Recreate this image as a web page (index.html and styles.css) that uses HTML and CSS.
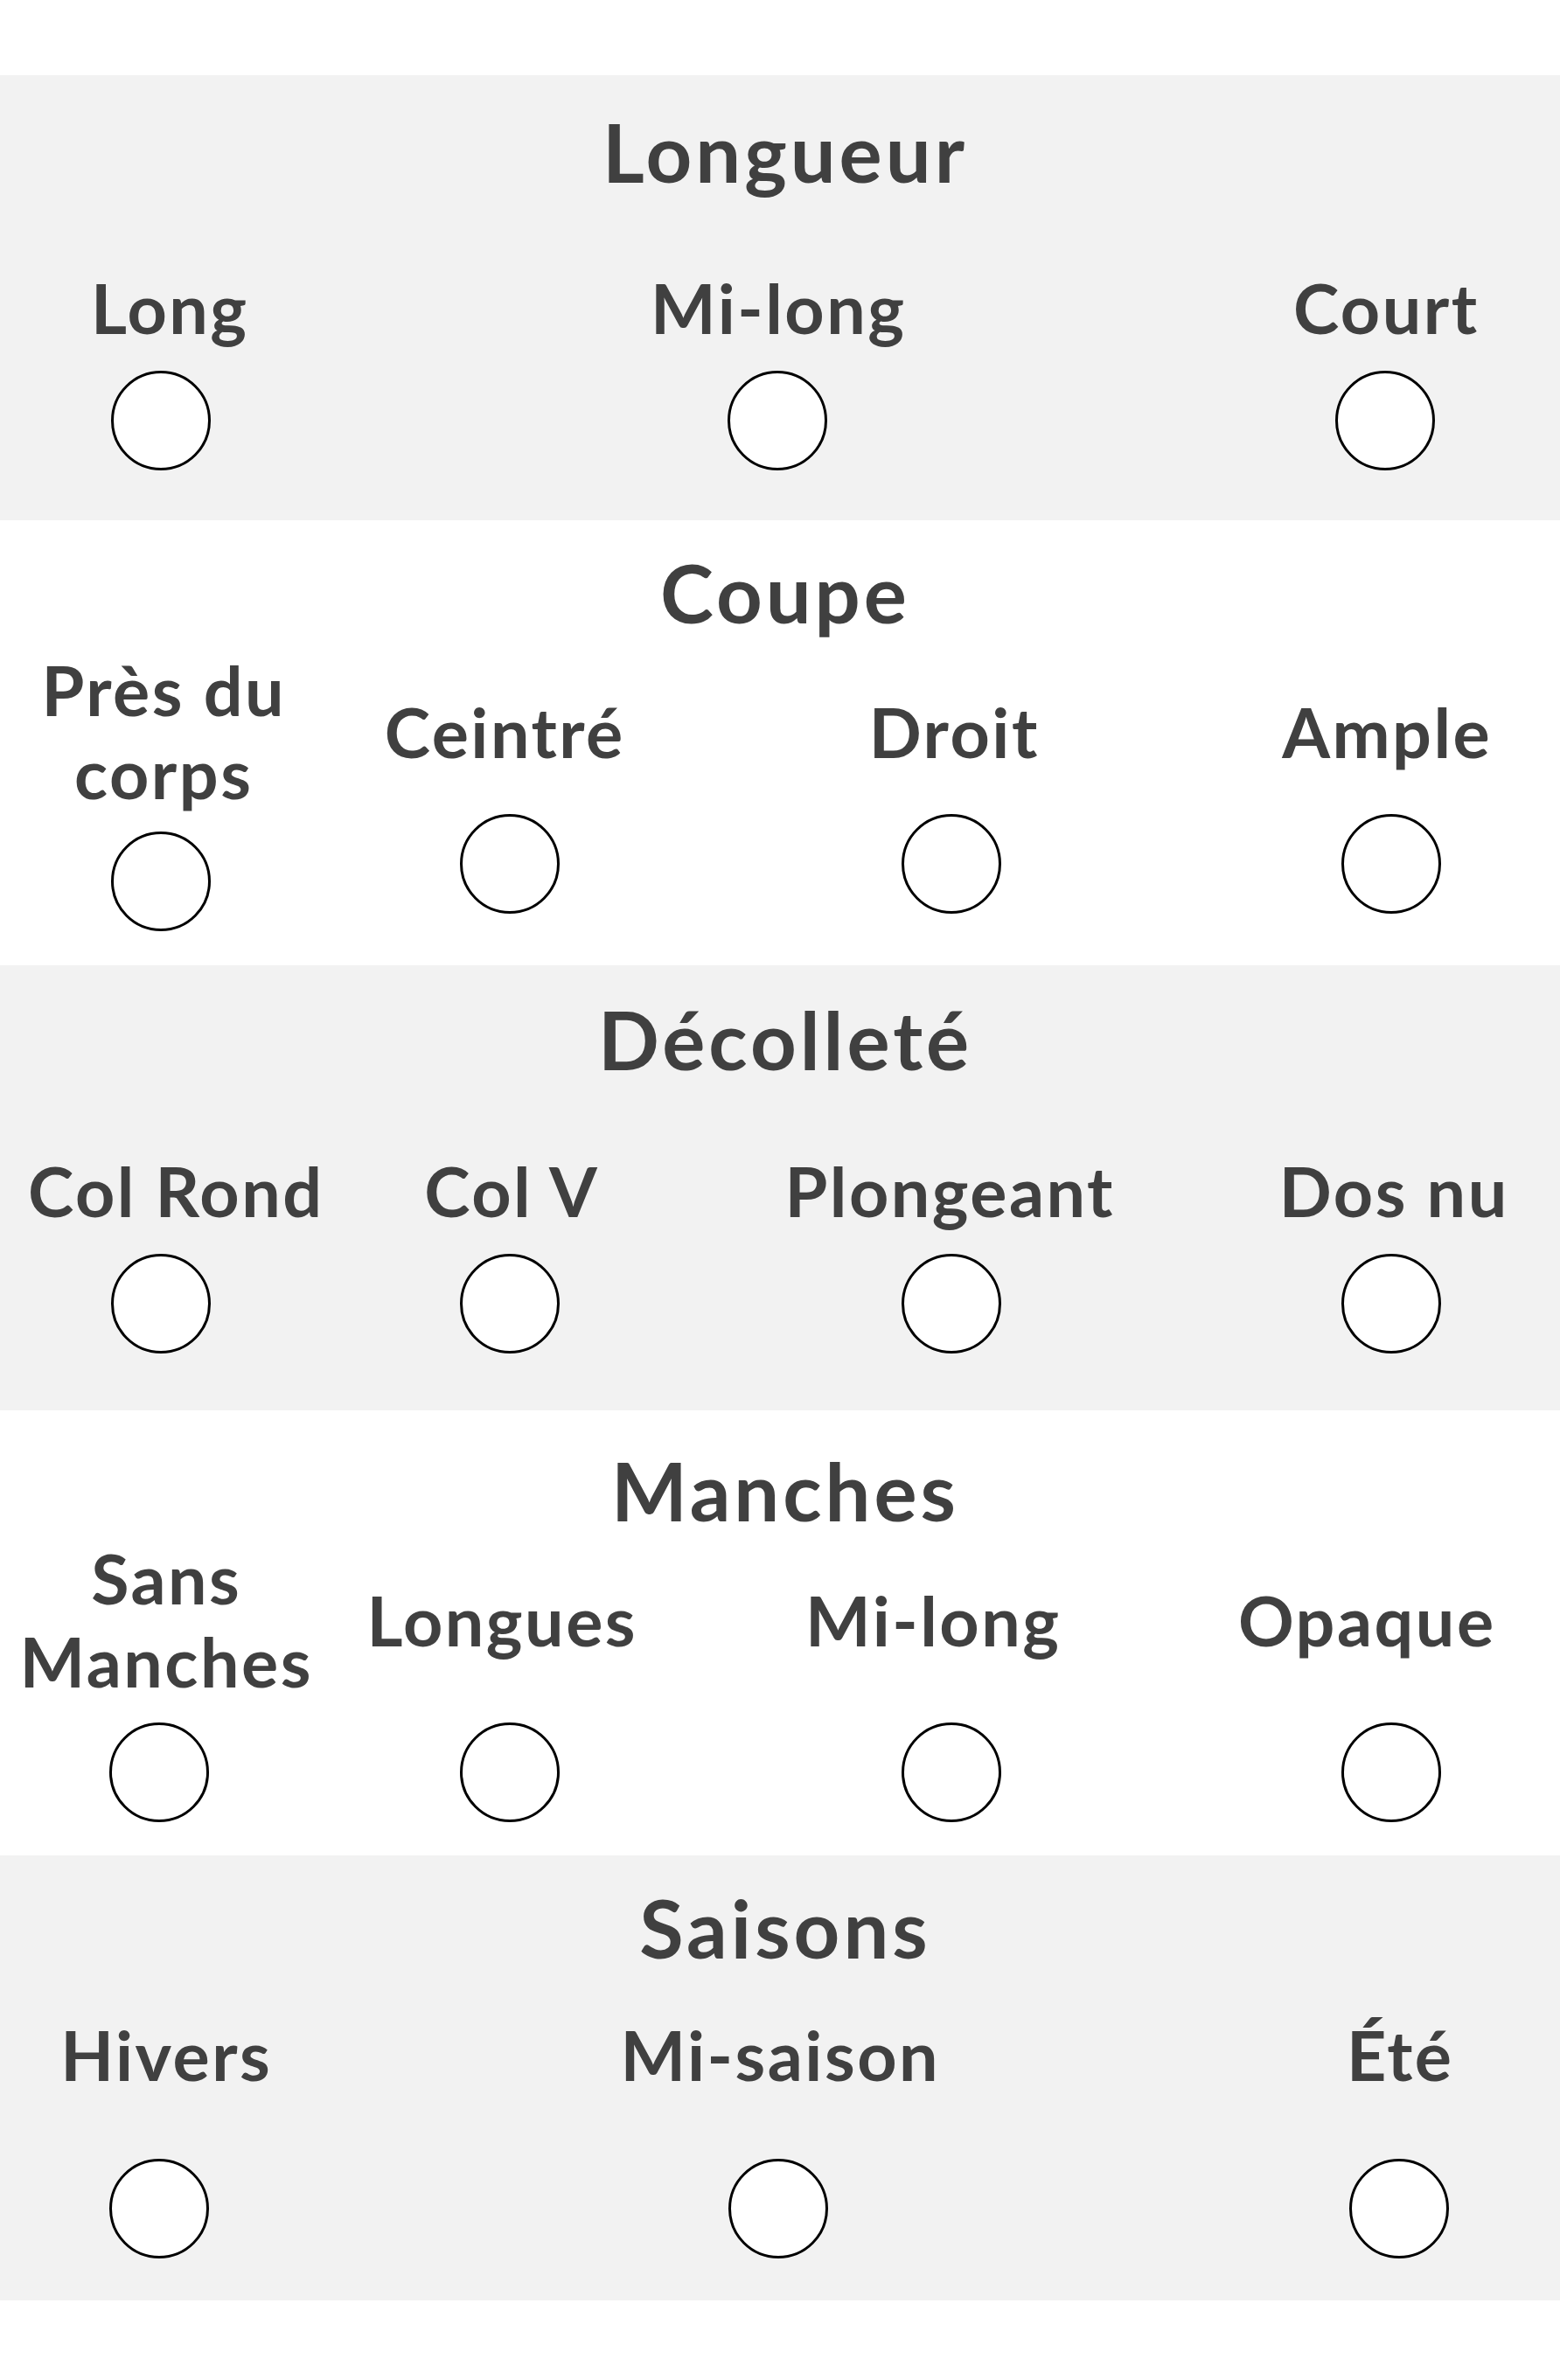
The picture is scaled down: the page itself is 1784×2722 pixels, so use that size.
FILE: index.html
```html
<!DOCTYPE html>
<html lang="fr">
<head>
<meta charset="utf-8">
<title>Filtres</title>
<link rel="stylesheet" href="styles.css">
</head>
<body>
<main class="form">
  <section class="group group--shade g-longueur">
    <h2 class="group-title">Longueur</h2>
    <div class="labels">
      <label class="label" for="lg1">Long</label>
      <label class="label" for="lg2">Mi-long</label>
      <label class="label" for="lg3">Court</label>
    </div>
    <div class="dots">
      <input class="dot" type="radio" name="longueur" id="lg1">
      <input class="dot" type="radio" name="longueur" id="lg2">
      <input class="dot" type="radio" name="longueur" id="lg3">
    </div>
  </section>

  <section class="group g-coupe">
    <h2 class="group-title">Coupe</h2>
    <div class="labels">
      <label class="label" for="cp1">Près du<br>corps</label>
      <label class="label" for="cp2">Ceintré</label>
      <label class="label" for="cp3">Droit</label>
      <label class="label" for="cp4">Ample</label>
    </div>
    <div class="dots">
      <input class="dot dot--low" type="radio" name="coupe" id="cp1">
      <input class="dot" type="radio" name="coupe" id="cp2">
      <input class="dot" type="radio" name="coupe" id="cp3">
      <input class="dot" type="radio" name="coupe" id="cp4">
    </div>
  </section>

  <section class="group group--shade g-decollete">
    <h2 class="group-title">Décolleté</h2>
    <div class="labels">
      <label class="label" for="dc1">Col Rond</label>
      <label class="label" for="dc2">Col V</label>
      <label class="label" for="dc3">Plongeant</label>
      <label class="label" for="dc4">Dos nu</label>
    </div>
    <div class="dots">
      <input class="dot" type="radio" name="decollete" id="dc1">
      <input class="dot" type="radio" name="decollete" id="dc2">
      <input class="dot" type="radio" name="decollete" id="dc3">
      <input class="dot" type="radio" name="decollete" id="dc4">
    </div>
  </section>

  <section class="group g-manches">
    <h2 class="group-title">Manches</h2>
    <div class="labels">
      <label class="label" for="mn1">Sans<br>Manches</label>
      <label class="label" for="mn2">Longues</label>
      <label class="label" for="mn3">Mi-long</label>
      <label class="label" for="mn4">Opaque</label>
    </div>
    <div class="dots">
      <input class="dot" type="radio" name="manches" id="mn1">
      <input class="dot" type="radio" name="manches" id="mn2">
      <input class="dot" type="radio" name="manches" id="mn3">
      <input class="dot" type="radio" name="manches" id="mn4">
    </div>
  </section>

  <section class="group group--shade g-saisons">
    <h2 class="group-title">Saisons</h2>
    <div class="labels">
      <label class="label" for="ss1">Hivers</label>
      <label class="label" for="ss2">Mi-saison</label>
      <label class="label" for="ss3">Été</label>
    </div>
    <div class="dots">
      <input class="dot" type="radio" name="saisons" id="ss1">
      <input class="dot" type="radio" name="saisons" id="ss2">
      <input class="dot" type="radio" name="saisons" id="ss3">
    </div>
  </section>
</main>
</body>
</html>
```

FILE: styles.css
```css
html, body {
  margin: 0;
  padding: 0;
  background: #ffffff;
}

body {
  font-family: Lato, "Open Sans", "Liberation Sans", sans-serif;
  color: #404040;
  overflow-x: hidden;
}

.form {
  padding-top: 86px;
  padding-bottom: 91px;
}

.group {
  height: 509px;
  box-sizing: border-box;
  overflow: hidden;
  display: flex;
  flex-direction: column;
  background: #ffffff;
}

.group--shade {
  background: #f2f2f2;
}

.group-title {
  margin: 0;
  padding-top: var(--title-top);
  padding-left: 12px;
  font-size: 92px;
  line-height: 92px;
  font-weight: 700;
  letter-spacing: 4px;
  text-align: center;
}

.labels {
  display: grid;
  align-items: center;
  margin-top: var(--label-gap);
  grid-template-columns: var(--label-cols);
}

.label {
  padding-left: 2.5px;
  font-size: 79px;
  line-height: 95px;
  font-weight: 700;
  letter-spacing: 2.5px;
  text-align: center;
  white-space: nowrap;
}

.dots {
  display: grid;
  align-items: start;
  margin-top: var(--dot-gap);
  grid-template-columns: var(--dot-cols);
}

.dot {
  -webkit-appearance: none;
  appearance: none;
  margin: 0;
  justify-self: center;
  width: 114px;
  height: 114px;
  box-sizing: border-box;
  border: 3px solid #000000;
  border-radius: 50%;
  background: #ffffff;
}

.dot--low {
  margin-top: 20px;
}

.g-longueur {
  --title-top: 42px;
  --label-gap: 84px;
  --dot-gap: 25px;
  --label-cols: 386px 1006px 384px;
  --dot-cols: 368px 1042px 348px;
}

.g-coupe {
  --title-top: 37px;
  --label-gap: 17px;
  --dot-gap: 0px;
  --label-cols: 372px 408px 620px 370px;
  --dot-cols: 368px 430px 580px 426px;
}

.g-decollete {
  --title-top: 39px;
  --label-gap: 79px;
  --dot-gap: 25px;
  --label-cols: 400px 368px 634px 382px;
  --dot-cols: 368px 430px 580px 426px;
}

.g-manches {
  --title-top: 46px;
  --label-gap: 6px;
  --dot-gap: 23px;
  --label-cols: 378px 390px 596px 396px;
  --dot-cols: 364px 438px 572px 434px;
}

.g-saisons {
  --title-top: 37px;
  --label-gap: 51px;
  --dot-gap: 72px;
  --label-cols: 378px 1026px 392px;
  --dot-cols: 364px 1052px 368px;
}
```
